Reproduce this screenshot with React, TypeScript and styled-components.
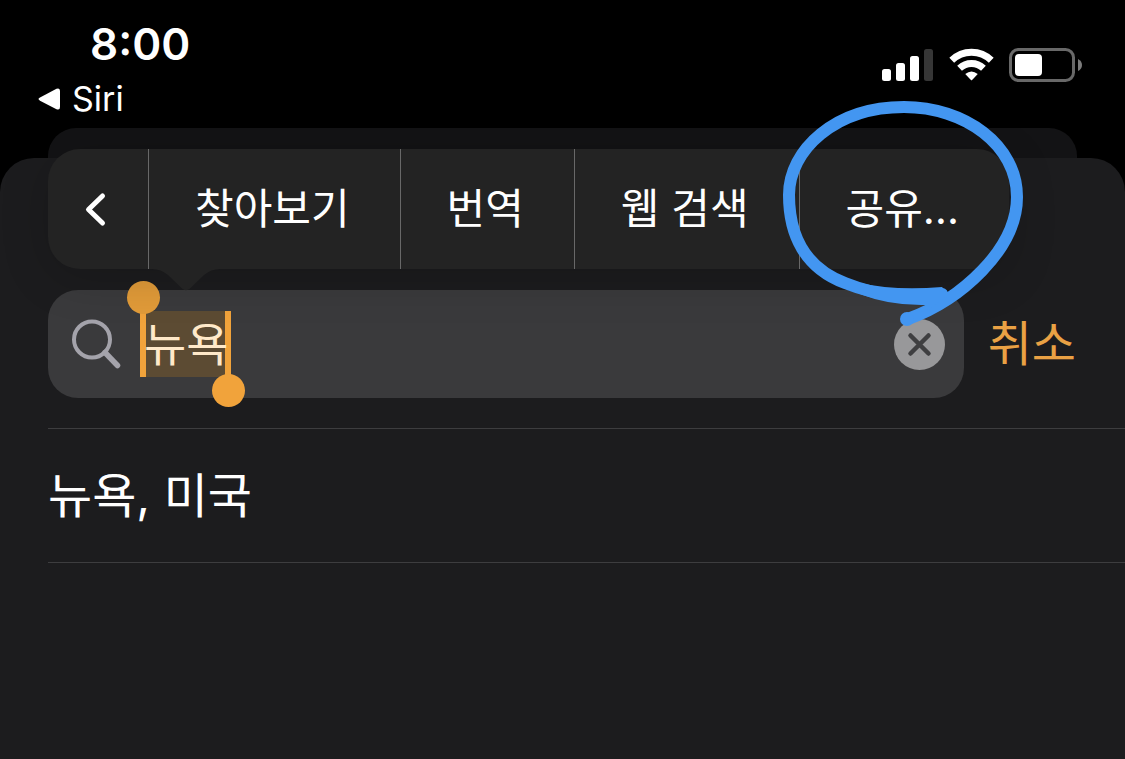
import React, { useState } from "react";
import styled, { createGlobalStyle } from "styled-components";

const GlobalStyle = createGlobalStyle`
  *, *::before, *::after { box-sizing: border-box; }
  html, body { margin: 0; background: #000; }
  body, button, input { font-family: Inter, "Noto Sans CJK KR", sans-serif; }
  button { border: 0; padding: 0; background: none; color: inherit; cursor: pointer; }
`;

const Screen = styled.div`
  display: flex;
  flex-direction: column;
  min-height: 100vh;
  background: #000;
  color: #fff;
  overflow: hidden;
`;

const StatusBar = styled.header`
  display: flex;
  justify-content: space-between;
  align-items: flex-start;
  padding: 16px 42px 0 36px;
  height: 128px;
`;

const TimeBlock = styled.div`
  display: flex;
  flex-direction: column;
  gap: 7px;
`;

const Time = styled.time`
  padding-left: 54px;
  font-size: 44px;
  font-weight: 600;
  line-height: 56px;
`;

const BackLink = styled.a`
  display: flex;
  align-items: center;
  gap: 11px;
  font-size: 34px;
  line-height: 40px;
  color: #fff;
  text-decoration: none;
`;

const StatusIcons = styled.div`
  display: flex;
  align-items: center;
  gap: 15px;
  padding-top: 32px;
`;

const BackCard = styled.div`
  height: 30px;
  margin: 0 48px;
  border-radius: 28px 28px 0 0;
  background: #131315;
`;

const Sheet = styled.main`
  flex: 1;
  border-radius: 34px 34px 0 0;
  background: #1c1c1e;
`;

const SearchRow = styled.form`
  position: relative;
  display: flex;
  align-items: center;
  gap: 24px;
  padding: 132px 49px 30px 48px;
`;

const SearchField = styled.label`
  position: relative;
  flex: 1;
  min-width: 0;
  display: flex;
  align-items: center;
  gap: 22px;
  height: 108px;
  padding: 0 19px 0 23px;
  border-radius: 30px;
  background: #3a3a3c;
`;

const InputArea = styled.span`
  position: relative;
  flex: 1;
  min-width: 0;
  display: flex;
`;

const SearchInput = styled.input`
  position: relative;
  width: 100%;
  height: 66px;
  padding: 0;
  border: 0;
  outline: 0;
  background: transparent;
  color: #ffe9c9;
  font-size: 46px;
  line-height: 66px;
`;

const Selection = styled.span`
  position: absolute;
  top: 0;
  left: -4px;
  width: 91px;
  height: 66px;
  border: solid #f1a33b;
  border-width: 0 6px;
  background: #5c4b33;
`;

const Handle = styled.span<{ $end?: boolean }>`
  position: absolute;
  ${(p) => (p.$end ? "bottom: -30px; right: -20px;" : "top: -30px; left: -19px;")}
  width: 33px;
  height: 33px;
  border-radius: 50%;
  background: ${(p) => (p.$end ? "#f1a33b" : "#e19b39")};
`;

const ClearButton = styled.button`
  display: flex;
`;

const CancelButton = styled.button`
  font-size: 48px;
  line-height: 70px;
  color: #eaa144;
`;

const EditMenu = styled.div`
  position: absolute;
  top: -9px;
  left: 48px;
  display: flex;
  height: 120px;
  border-radius: 32px;
  background: #232323;
  box-shadow: 0 8px 48px rgba(0, 0, 0, 0.18);
`;

const MenuItem = styled.button<{ $compact?: boolean }>`
  position: relative;
  display: flex;
  align-items: center;
  justify-content: center;
  white-space: nowrap;
  padding: ${(p) => (p.$compact ? "0 36px" : "0 50px 0 46px")};
  font-size: 42px;
  line-height: 60px;

  & + & { border-left: 1px solid #686868; }
`;

const MenuTail = styled.svg`
  position: absolute;
  top: 119px;
  left: 96px;
`;

const Annotation = styled.svg`
  position: absolute;
  top: -59px;
  left: -30px;
  pointer-events: none;
`;

const Results = styled.ul`
  list-style: none;
  margin: 0 0 0 48px;
  padding: 0;
  border-top: 1px solid #3d3d3f;
`;

const Result = styled.li`
  display: flex;
  border-bottom: 1px solid #3d3d3f;
`;

const ResultButton = styled.button`
  flex: 1;
  height: 133px;
  font-size: 48px;
  line-height: 70px;
  text-align: left;
`;

const Signal = () => (
  <svg width="52" height="33" viewBox="0 0 52 33" fill="#fff" aria-label="신호">
    <rect x="0" y="20" width="9" height="12" rx="2.5" />
    <rect x="14" y="14" width="9" height="18" rx="2.5" />
    <rect x="28" y="7" width="9" height="25" rx="2.5" />
    <rect x="42" y="0" width="9" height="32" rx="2.5" fill="#363636" />
  </svg>
);

const Wifi = () => (
  <svg width="45" height="34" viewBox="0 0 46 34" fill="none" stroke="#fff" strokeWidth="7" aria-label="Wi-Fi">
    <path d="M2.8 12.2 C14 1.2 32 1.2 43.2 12.2" />
    <path d="M10.8 20.4 C17.7 13.8 28.3 13.8 35.2 20.4" />
    <path d="M16.6 26.3 Q23 20.8 29.4 26.3 L23.6 32.4 Q23 33 22.4 32.4 Z" fill="#fff" stroke="none" />
  </svg>
);

const Battery = () => (
  <svg width="74" height="34" viewBox="0 0 74 34" aria-label="배터리">
    <rect x="1.5" y="1.5" width="63" height="31" rx="8" fill="none" stroke="#686868" strokeWidth="3" />
    <rect x="6" y="6" width="27" height="22" rx="4" fill="#fff" />
    <path d="M69 11 Q73 13 73 17 Q73 21 69 23 Z" fill="#7c7c7c" />
  </svg>
);

const menuItems = ["찾아보기", "번역", "웹 검색"];

export default function App() {
  const [query, setQuery] = useState("뉴욕");
  return (
    <Screen>
      <GlobalStyle />
      <StatusBar>
        <TimeBlock>
          <Time>8:00</Time>
          <BackLink href="#siri">
            <svg width="25" height="22" viewBox="0 0 25 22" fill="#fff" aria-hidden="true">
              <path d="M4 9.4 L20.5 0.8 Q24 -0.6 24 3 V19 Q24 22.6 20.5 21.2 L4 12.8 Q1 11 4 9.4 Z" />
            </svg>
            Siri
          </BackLink>
        </TimeBlock>
        <StatusIcons>
          <Signal />
          <Wifi />
          <Battery />
        </StatusIcons>
      </StatusBar>
      <BackCard />
      <Sheet>
        <SearchRow onSubmit={(e) => e.preventDefault()}>
          <SearchField>
            <svg width="51" height="51" viewBox="0 0 51 51" fill="none" stroke="#a4a3ab" aria-hidden="true">
              <circle cx="21" cy="20.5" r="18" strokeWidth="4" />
              <path d="M34 33.5 L46.5 46.5" strokeWidth="5.5" strokeLinecap="round" />
            </svg>
            <InputArea>
              <Selection>
                <Handle />
                <Handle $end />
              </Selection>
              <SearchInput
                type="text"
                aria-label="검색"
                value={query}
                onChange={(e) => setQuery(e.target.value)}
              />
            </InputArea>
            <ClearButton type="button" aria-label="지우기" onClick={() => setQuery("")}>
              <svg width="51" height="51" viewBox="0 0 51 51">
                <circle cx="25.5" cy="25.5" r="25.5" fill="#98989a" />
                <path d="M16.5 16.5 L34.5 34.5 M34.5 16.5 L16.5 34.5" stroke="#3f3f41" strokeWidth="4.5" strokeLinecap="round" />
              </svg>
            </ClearButton>
          </SearchField>
          <CancelButton type="button">취소</CancelButton>
          <EditMenu>
            <MenuItem type="button" $compact aria-label="이전">
              <svg width="28" height="36" viewBox="0 0 28 36" fill="none" aria-hidden="true">
                <path d="M18.5 5 L4.5 18.5 L18.5 32" stroke="#fff" strokeWidth="5" strokeLinecap="round" strokeLinejoin="round" />
              </svg>
            </MenuItem>
            {menuItems.map((item) => (
              <MenuItem type="button" key={item}>{item}</MenuItem>
            ))}
            <MenuItem type="button">
              공유…
              <Annotation width="270" height="250" viewBox="770 90 270 250" aria-hidden="true">
                <path
                  d="M942 294 C918 300 880 297 845 283 C805 268 789 235 789 195 C789 150 835 107 904 107 C965 107 1017 145 1017 197 C1017 250 960 300 908 319"
                  fill="none"
                  stroke="#4396f1"
                  strokeWidth="12"
                  strokeLinecap="round"
                  strokeLinejoin="round"
                />
                <path d="M860 283 Q895 291 942 287 L949 295 L925 312 L914 311 L927 305 Q890 306 860 294 Z" fill="#4396f1" />
                <circle cx="907" cy="319" r="7" fill="#4396f1" />
              </Annotation>
            </MenuItem>
            <MenuTail width="84" height="23" viewBox="0 0 84 23" fill="#232323" aria-hidden="true">
              <path d="M8 0 V1 Q17 1 24 7 L38 20.5 Q42 24 46 20.5 L60 7 Q67 1 76 1 V0 Z" />
            </MenuTail>
          </EditMenu>
        </SearchRow>
        <Results>
          <Result>
            <ResultButton type="button">뉴욕, 미국</ResultButton>
          </Result>
        </Results>
      </Sheet>
    </Screen>
  );
}
